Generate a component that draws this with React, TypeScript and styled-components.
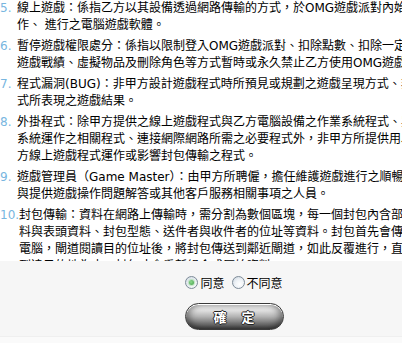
import React, { useState } from 'react';
import styled, { createGlobalStyle } from 'styled-components';

const GlobalStyle = createGlobalStyle`
  html, body {
    margin: 0;
    padding: 0;
    background: #fafafa;
    overflow: hidden;
  }
`;

const Page = styled.div`
  width: 468px;
  overflow: hidden;
  font-family: "DejaVu Sans", "Noto Sans CJK TC", sans-serif;
  font-size: 12px;
  color: #000;
`;

const ScrollBox = styled.div`
  height: 261px;
  overflow: hidden;
  background: #fff;
`;

const List = styled.div`
  display: flex;
  flex-direction: column;
  gap: 4px;
`;

const Item = styled.div`
  display: flex;
`;

const Num = styled.span`
  flex: 0 0 17px;
  font-family: "DejaVu Sans", sans-serif;
  font-size: 12px;
  line-height: 17px;
  color: #78b6df;
`;

const Body = styled.div`
  flex: 1;
  min-width: 0;
`;

const Line = styled.div`
  height: 17px;
  line-height: 17px;
  white-space: nowrap;
`;

const Footer = styled.div`
  height: 76px;
  background: #f6f6f6;
  display: flex;
  flex-direction: column;
  align-items: center;
  padding-top: 15px;
  box-sizing: border-box;
  gap: 14px;
  border-bottom: 1px solid #efefef;
`;

const RadioRow = styled.div`
  display: flex;
  align-items: center;
  gap: 7px;
  height: 13px;
`;

const RadioLabel = styled.label`
  display: flex;
  align-items: center;
  gap: 2px;
  font-family: "Noto Sans CJK TC", sans-serif;
  font-size: 12px;
  line-height: 13px;
  cursor: pointer;
`;

const RadioDot = styled.span<{ $on: boolean }>`
  position: relative;
  width: 13px;
  height: 13px;
  border-radius: 50%;
  box-sizing: border-box;
  border: 1px solid #7d8b98;
  background: radial-gradient(circle at 60% 65%, #ffffff 0%, #eef2f6 45%, #c9d3dd 100%);

  &::after {
    content: '';
    display: ${(p) => (p.$on ? 'block' : 'none')};
    position: absolute;
    left: 3px;
    top: 3px;
    width: 5px;
    height: 5px;
    border-radius: 50%;
    background: radial-gradient(circle at 40% 40%, #8fd98f 0%, #3e9e45 100%);
    box-shadow: 0 0 1px 1px rgba(120, 200, 120, 0.45);
  }
`;

const ConfirmButton = styled.button`
  width: 99px;
  height: 27px;
  border-radius: 14px;
  border: 1px solid #3a3a3a;
  background: linear-gradient(
    to bottom,
    #f4f4f4 0%,
    #e2e2e2 25%,
    #b4b4b4 50%,
    #7a7a7a 75%,
    #4a4a4a 100%
  );
  box-shadow: inset 0 1px 0 #fff, inset 4px 0 6px rgba(0, 0, 0, 0.35),
    inset -4px 0 6px rgba(0, 0, 0, 0.35);
  font-family: "Noto Sans CJK TC", sans-serif;
  font-weight: bold;
  font-size: 13px;
  letter-spacing: 15px;
  padding: 0 0 0 15px;
  color: #fff;
  text-shadow: -1px 0 #222, 1px 0 #222, 0 -1px #222, 0 1px #222;
  cursor: pointer;
`;

const items: { n: string; lines: string[] }[] = [
  {
    n: '5.',
    lines: [
      '線上遊戲：係指乙方以其設備透過網路傳輸的方式，於OMG遊戲派對內始得操',
      '作、 進行之電腦遊戲軟體。',
    ],
  },
  {
    n: '6.',
    lines: [
      '暫停遊戲權限處分：係指以限制登入OMG遊戲派對、扣除點數、扣除一定數量之',
      '遊戲戰績、虛擬物品及刪除角色等方式暫時或永久禁止乙方使用OMG遊戲派對。',
    ],
  },
  {
    n: '7.',
    lines: [
      '程式漏洞(BUG)：非甲方設計遊戲程式時所預見或規劃之遊戲呈現方式、非正常程',
      '式所表現之遊戲結果。',
    ],
  },
  {
    n: '8.',
    lines: [
      '外掛程式：除甲方提供之線上遊戲程式與乙方電腦設備之作業系統程式、與作業',
      '系統運作之相關程式、連接網際網路所需之必要程式外，非甲方所提供用以影響甲',
      '方線上遊戲程式運作或影響封包傳輸之程式。',
    ],
  },
  {
    n: '9.',
    lines: [
      '遊戲管理員（Game Master）：由甲方所聘僱，擔任維護遊戲進行之順暢',
      '與提供遊戲操作問題解答或其他客戶服務相關事項之人員。',
    ],
  },
  {
    n: '10.',
    lines: [
      '封包傳輸：資料在網路上傳輸時，需分割為數個區塊，每一個封包內含部分的資',
      '料與表頭資料、封包型態、送件者與收件者的位址等資料。封包首先會傳送到閘道',
      '電腦，閘道閱讀目的位址後，將封包傳送到鄰近閘道，如此反覆進行，直到封包',
      '到達目的地為止，封包才會重新組合成原始資料。',
    ],
  },
];

export default function App() {
  const [agree, setAgree] = useState(true);
  return (
    <Page>
      <GlobalStyle />
      <ScrollBox>
        <List>
          {items.map((it) => (
            <Item key={it.n}>
              <Num>{it.n}</Num>
              <Body>
                {it.lines.map((l, i) => (
                  <Line key={i}>{l}</Line>
                ))}
              </Body>
            </Item>
          ))}
        </List>
      </ScrollBox>
      <Footer>
        <RadioRow>
          <RadioLabel onClick={() => setAgree(true)}>
            <RadioDot $on={agree} />
            同意
          </RadioLabel>
          <RadioLabel onClick={() => setAgree(false)}>
            <RadioDot $on={!agree} />
            不同意
          </RadioLabel>
        </RadioRow>
        <ConfirmButton>確定</ConfirmButton>
      </Footer>
    </Page>
  );
}
